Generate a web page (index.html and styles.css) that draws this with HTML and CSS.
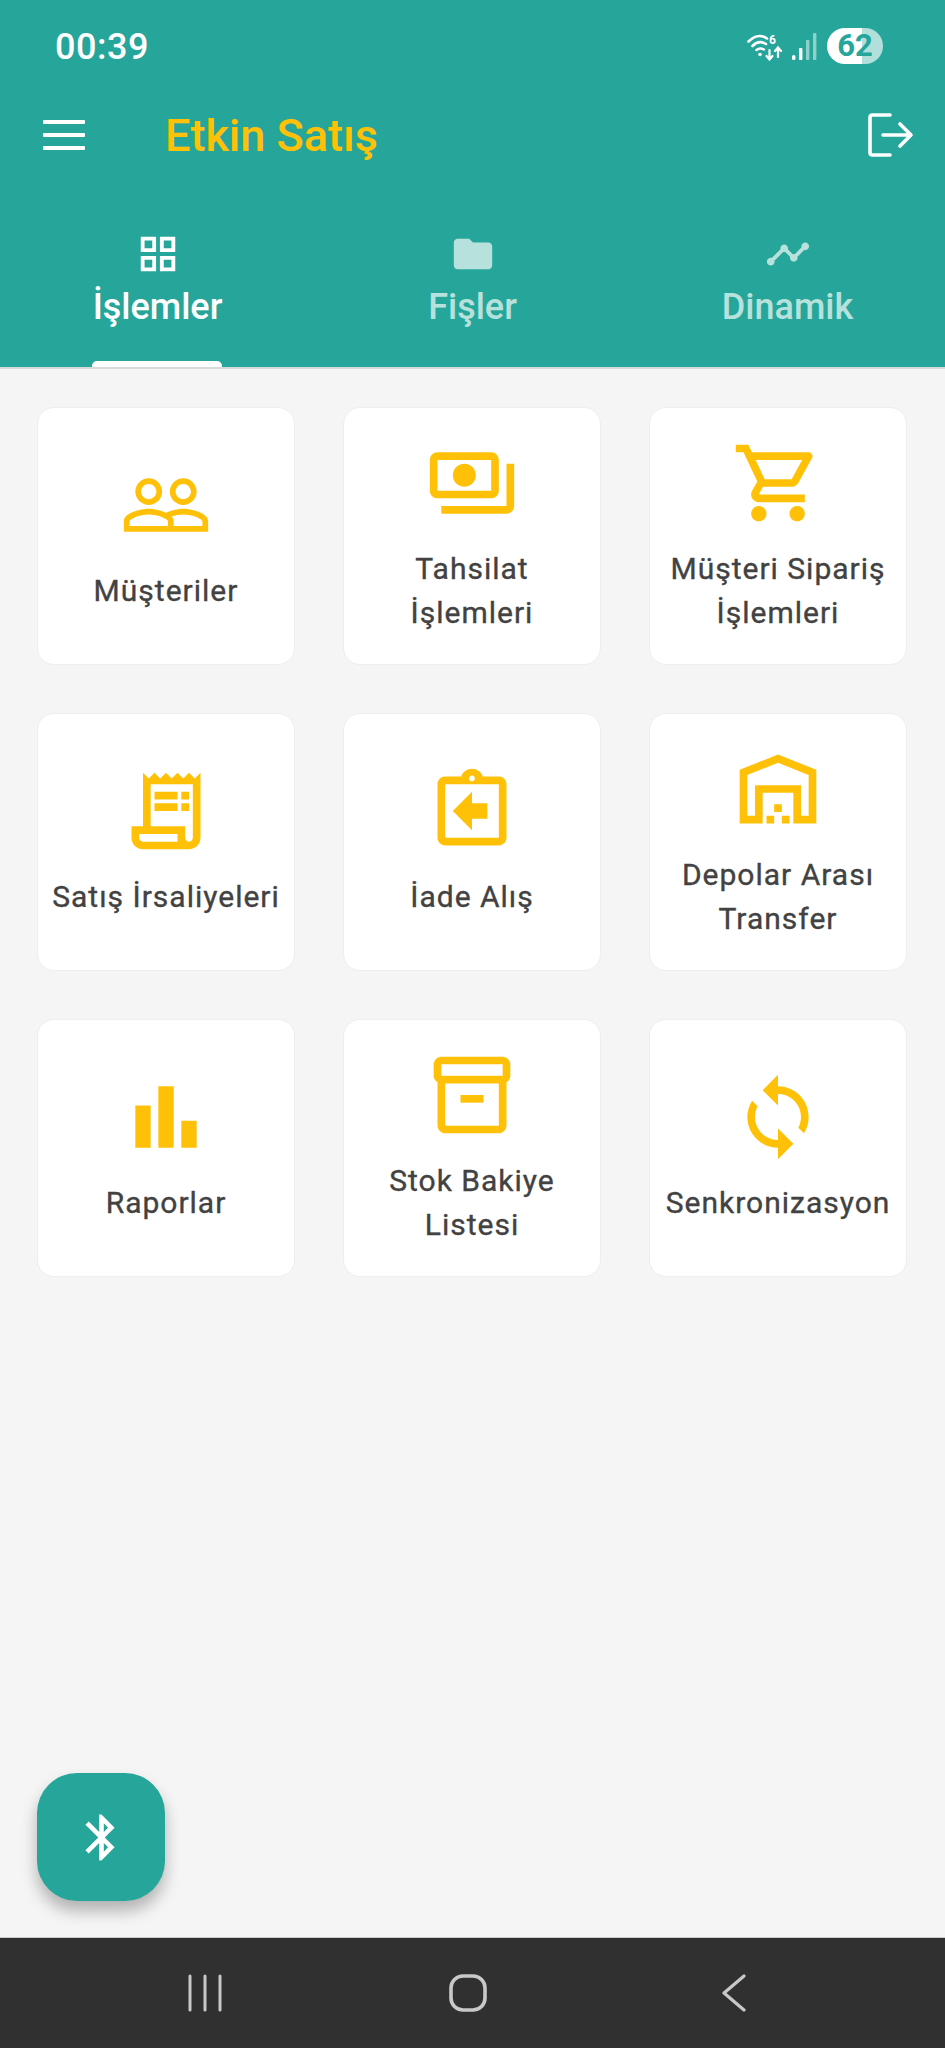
FILE: index.html
```html
<!DOCTYPE html>
<html lang="tr">
<head>
    <meta charset="UTF-8">
    <meta name="viewport" content="width=device-width, initial-scale=1.0">
    <title>Etkin Satış</title>
    <link rel="stylesheet" href="styles.css">
</head>
<body>

    <header class="header">
        <div class="status-bar">
            <span class="clock">00:39</span>
            <div class="status-icons">
                <svg class="wifi" width="36" height="28" viewBox="0 0 36 28" fill="none" stroke="#fff" stroke-linecap="round">
                    <path d="M1.5 8.5C8 2 15 2 20 5.5" stroke-width="2.6"/>
                    <path d="M5.5 13C10 8.5 15 8.5 19 11" stroke-width="2.6"/>
                    <path d="M9.5 17C12 15 14.5 15 17 16.5" stroke-width="2.4"/>
                    <circle cx="13" cy="21.5" r="1.8" fill="#fff" stroke="none"/>
                    <path d="M22.5 17v9M19.5 23l3 3.5 3-3.5M31 24v-9M28 18l3-3.5 3 3.5" stroke-width="2.2"/>
                    <text x="22" y="11" class="wifi-gen">6</text>
                </svg>
                <svg class="signal" width="26" height="28" viewBox="0 0 26 28">
                    <rect x="1" y="22" width="3.4" height="5" rx="1.5" fill="#fff"/>
                    <rect x="8" y="15" width="3.4" height="12" rx="1" fill="#fff"/>
                    <rect x="15" y="7" width="3.4" height="20" rx="1" fill="#8fd0c9"/>
                    <rect x="22" y="0" width="3.4" height="27" rx="1" fill="#8fd0c9"/>
                </svg>
                <span class="battery">62</span>
            </div>
        </div>

        <div class="toolbar">
            <div class="menu-icon"><span></span><span></span><span></span></div>
            <h1 class="title">Etkin Satış</h1>
            <svg class="logout" width="46" height="44" viewBox="0 0 46 44" fill="none" stroke="#fff" stroke-width="3.6" stroke-linecap="round" stroke-linejoin="round">
                <path d="M22 2H4.5Q2 2 2 4.5v35Q2 42 4.5 42H22"/>
                <path d="M15 22h28M32 11l11 11-11 11"/>
            </svg>
        </div>

        <nav class="tabs">
            <div class="tab active">
                <svg class="tab-icon" viewBox="0 0 24 24"><path d="M3 3v8h8V3H3zm6 6H5V5h4v4zm-6 4v8h8v-8H3zm6 6H5v-4h4v4zm4-16v8h8V3h-8zm6 6h-4V5h4v4zm-6 4v8h8v-8h-8zm6 6h-4v-4h4v4z"/></svg>
                <span class="tab-label">İşlemler</span>
            </div>
            <div class="tab">
                <svg class="tab-icon" viewBox="0 0 24 24"><path d="M10 4H4c-1.1 0-1.99.9-1.99 2L2 18c0 1.1.9 2 2 2h16c1.1 0 2-.9 2-2V8c0-1.1-.9-2-2-2h-8l-2-2z"/></svg>
                <span class="tab-label">Fişler</span>
            </div>
            <div class="tab">
                <svg class="tab-icon" viewBox="0 0 24 24"><path d="M23 8c0 1.1-.9 2-2 2-.18 0-.35-.02-.51-.07l-3.56 3.55c.05.16.07.34.07.52 0 1.1-.9 2-2 2s-2-.9-2-2c0-.18.02-.36.07-.52l-2.55-2.55c-.16.05-.34.07-.52.07s-.36-.02-.52-.07l-4.55 4.56c.05.16.07.33.07.51 0 1.1-.9 2-2 2s-2-.9-2-2 .9-2 2-2c.18 0 .35.02.51.07l4.56-4.55C8.02 9.36 8 9.18 8 9c0-1.1.9-2 2-2s2 .9 2 2c0 .18-.02.36-.07.52l2.55 2.55c.16-.05.34-.07.52-.07s.36.02.52.07l3.55-3.56C19.02 8.35 19 8.18 19 8c0-1.1.9-2 2-2s2 .9 2 2z"/></svg>
                <span class="tab-label">Dinamik</span>
            </div>
        </nav>
    </header>

    <main class="content">
        <div class="grid">
            <div class="card">
                <svg class="card-icon" viewBox="0 0 24 24"><path d="M16.5 13c-1.2 0-3.07.34-4.5 1-1.43-.67-3.3-1-4.5-1C5.33 13 1 14.08 1 16.25V19h22v-2.75c0-2.17-4.33-3.25-6.5-3.25zm-4 4.5h-10v-1.25c0-.54 2.56-1.75 5-1.75s5 1.21 5 1.75v1.25zm9 0H14v-1.25c0-.46-.2-.86-.52-1.22.88-.3 1.96-.53 3.02-.53 2.44 0 5 1.21 5 1.75v1.25zM7.5 12c1.93 0 3.5-1.57 3.5-3.5S9.43 5 7.5 5 4 6.57 4 8.5 5.57 12 7.5 12zm0-5.5c1.1 0 2 .9 2 2s-.9 2-2 2-2-.9-2-2 .9-2 2-2zm9 5.5c1.93 0 3.5-1.57 3.5-3.5S18.43 5 16.5 5 13 6.57 13 8.5s1.57 3.5 3.5 3.5zm0-5.5c1.1 0 2 .9 2 2s-.9 2-2 2-2-.9-2-2 .9-2 2-2z"/></svg>
                <span class="card-label">Müşteriler</span>
            </div>
            <div class="card">
                <svg class="card-icon" viewBox="0 0 24 24"><path d="M19 14V6c0-1.1-.9-2-2-2H3c-1.1 0-2 .9-2 2v8c0 1.1.9 2 2 2h14c1.1 0 2-.9 2-2zm-2 0H3V6h14v8zm-7-7c-1.66 0-3 1.34-3 3s1.34 3 3 3 3-1.34 3-3-1.34-3-3-3zm13 0v11c0 1.1-.9 2-2 2H4v-2h17V7h2z"/></svg>
                <span class="card-label">Tahsilat İşlemleri</span>
            </div>
            <div class="card">
                <svg class="card-icon" viewBox="0 0 24 24"><path d="M15.55 13c.75 0 1.41-.41 1.75-1.03l3.58-6.49c.37-.66-.11-1.48-.87-1.48H5.21l-.94-2H1v2h2l3.6 7.59-1.35 2.44C4.52 15.37 5.48 17 7 17h12v-2H7l1.1-2h7.45zM6.16 6h12.15l-2.76 5H8.53L6.16 6zM7 18c-1.1 0-1.99.9-1.99 2S5.9 22 7 22s2-.9 2-2-.9-2-2-2zm10 0c-1.1 0-1.99.9-1.99 2s.89 2 1.99 2 2-.9 2-2-.9-2-2-2z"/></svg>
                <span class="card-label">Müşteri Sipariş İşlemleri</span>
            </div>
            <div class="card">
                <svg class="card-icon" viewBox="0 0 24 24"><path d="M19.5 3.5 18 2l-1.5 1.5L15 2l-1.5 1.5L12 2l-1.5 1.5L9 2 7.5 3.5 6 2v14H3v3c0 1.66 1.34 3 3 3h12c1.66 0 3-1.34 3-3V2l-1.5 1.5zM15 20H6c-.55 0-1-.45-1-1v-1h10v2zm4-1c0 .55-.45 1-1 1s-1-.45-1-1v-3H8V5h11v14z"/><path d="M9 7h6v2H9zm7 0h2v2h-2zm-7 3h6v2H9zm7 0h2v2h-2z"/></svg>
                <span class="card-label">Satış İrsaliyeleri</span>
            </div>
            <div class="card">
                <svg class="card-icon" viewBox="0 0 24 24"><path d="M19 3h-4.18C14.4 1.84 13.3 1 12 1c-1.3 0-2.4.84-2.82 2H5c-1.1 0-2 .9-2 2v14c0 1.1.9 2 2 2h14c1.1 0 2-.9 2-2V5c0-1.1-.9-2-2-2zm-7-.25c.22 0 .41.1.55.25.12.13.2.31.2.5 0 .41-.34.75-.75.75s-.75-.34-.75-.75c0-.19.08-.37.2-.5.14-.15.33-.25.55-.25zM19 19H5V5h14v14zM12 7l-5 5 5 5v-3h4v-4h-4V7z"/></svg>
                <span class="card-label">İade Alış</span>
            </div>
            <div class="card">
                <svg class="card-icon" viewBox="0 0 24 24"><path d="M20 8.35V19h-2v-8H6v8H4V8.35l8-3.2 8 3.2M22 21V7L12 3 2 7v14h6v-8h8v8h6zm-11-2H9v2h2v-2zm2-3h-2v2h2v-2zm2 3h-2v2h2v-2z"/></svg>
                <span class="card-label">Depolar Arası Transfer</span>
            </div>
            <div class="card">
                <svg class="card-icon" viewBox="0 0 24 24"><path d="M4 9h4v11H4zm12 4h4v7h-4zm-6-9h4v16h-4z"/></svg>
                <span class="card-label">Raporlar</span>
            </div>
            <div class="card">
                <svg class="card-icon" viewBox="0 0 24 24"><path d="M20 2H4c-1 0-2 .9-2 2v3.01c0 .72.43 1.34 1 1.69V20c0 1.1 1.1 2 2 2h14c.9 0 2-.9 2-2V8.7c.57-.35 1-.97 1-1.69V4c0-1.1-1-2-2-2zm-1 18H5V9h14v11zm1-13H4V4h16v3z"/><path d="M9 12h6v2H9z"/></svg>
                <span class="card-label">Stok Bakiye Listesi</span>
            </div>
            <div class="card">
                <svg class="card-icon" viewBox="0 0 24 24"><path d="M12 4V1L8 5l4 4V6c3.31 0 6 2.69 6 6 0 1.01-.25 1.97-.7 2.8l1.46 1.46C19.54 15.03 20 13.57 20 12c0-4.42-3.58-8-8-8zm0 14c-3.31 0-6-2.69-6-6 0-1.01.25-1.97.7-2.8L5.24 7.74C4.46 8.97 4 10.43 4 12c0 4.42 3.58 8 8 8v3l4-4-4-4v3z"/></svg>
                <span class="card-label">Senkronizasyon</span>
            </div>
        </div>

        <button class="fab">
            <svg class="fab-icon" viewBox="0 0 24 24"><path d="M17.71 7.71L12 2h-1v7.59L6.41 5 5 6.41 10.59 12 5 17.59 6.41 19 11 14.41V22h1l5.71-5.71-4.3-4.29 4.3-4.29zM13 5.83l1.88 1.88L13 9.59V5.83zm1.88 10.46L13 18.17v-3.76l1.88 1.88z"/></svg>
        </button>
    </main>

    <footer class="system-nav">
        <svg width="36" height="38" viewBox="0 0 36 38" stroke="#c8c8c8" stroke-width="3" stroke-linecap="round">
            <path d="M3 2v34M18 2v34M33 2v34"/>
        </svg>
        <svg class="nav-home" width="38" height="38" viewBox="0 0 38 38" fill="none" stroke="#c8c8c8" stroke-width="3.6">
            <rect x="2" y="2" width="34" height="34" rx="12"/>
        </svg>
        <svg width="26" height="38" viewBox="0 0 26 38" fill="none" stroke="#c8c8c8" stroke-width="3.2" stroke-linecap="round" stroke-linejoin="round">
            <path d="M23 2L3 19l20 17" />
        </svg>
    </footer>

</body>
</html>
```

FILE: styles.css
```css
* { box-sizing: border-box; }
body { margin: 0; width: 945px; height: 2048px; display: flex; flex-direction: column; font-family: Roboto, sans-serif; background-color: #f5f5f5; overflow: hidden; }

.header { height: 369px; background-color: #26a69a; border-bottom: 2px solid #d5dcdb; color: white; }
.status-bar { height: 92px; padding: 2px 62px 0 55px; display: flex; align-items: center; justify-content: space-between; }
.clock { font-size: 36px; font-weight: 500; letter-spacing: 0.5px; }
.status-icons { display: flex; align-items: center; }
.wifi { margin-right: 8px; }
.wifi-gen { font-family: Roboto, sans-serif; font-size: 12px; font-weight: 700; fill: white; stroke: none; }
.signal { margin-right: 10px; }
.battery { width: 56px; height: 36px; margin-top: -2px; border-radius: 18px; background: linear-gradient(to right, white 63%, #b3dfda 63%); color: #26a69a; font-size: 31px; font-weight: 700; line-height: 36px; text-align: center; }

.toolbar { height: 86px; padding: 0 31px 0 43px; display: flex; align-items: center; }
.menu-icon { width: 42px; display: flex; flex-direction: column; gap: 9px; }
.menu-icon span { height: 4px; background-color: white; border-radius: 1px; }
.title { margin: 0 0 0 80px; flex: 1; color: #ffc107; font-size: 45px; font-weight: 500; }

.tabs { height: 189px; padding-top: 53px; display: flex; }
.tab { flex: 1; position: relative; display: flex; flex-direction: column; align-items: center; color: #b7e1dc; fill: #b7e1dc; }
.tab.active { color: white; fill: white; }
.tab-icon { width: 46px; height: 46px; }
.tab-label { margin-top: 8px; font-size: 36px; font-weight: 500; line-height: 44px; }
.tab.active::after { content: ""; position: absolute; bottom: 0; left: 92px; width: 130px; height: 6px; background-color: white; border-radius: 5px 5px 0 0; }

.content { flex: 1; position: relative; padding: 38px 37px; }
.grid { display: grid; grid-template-columns: repeat(3, 258px); grid-auto-rows: 258px; gap: 48px; }
.card { padding: 0 8px; background: white; border: 1px solid #eeeeee; border-radius: 17px; display: flex; flex-direction: column; align-items: center; justify-content: center; gap: 18px; }
.card-icon { width: 92px; height: 92px; flex: none; fill: #ffc107; }
.card-label { color: #424242; -webkit-text-stroke: 0.35px #424242; font-size: 30px; font-weight: 400; letter-spacing: 1px; line-height: 44px; text-align: center; }

.fab { position: absolute; left: 37px; bottom: 36px; width: 128px; height: 128px; padding: 0; background-color: #26a69a; border: none; border-radius: 40px; box-shadow: 0 10px 16px rgba(0, 0, 0, 0.28); display: flex; align-items: center; justify-content: center; }
.fab-icon { width: 55px; height: 55px; fill: white; }

.system-nav { height: 111px; padding: 0 198px 0 187px; background-color: #303030; border-top: 1px solid #c9c9c9; display: flex; align-items: center; justify-content: space-between; }
.nav-home { margin-right: 8px; }
```
